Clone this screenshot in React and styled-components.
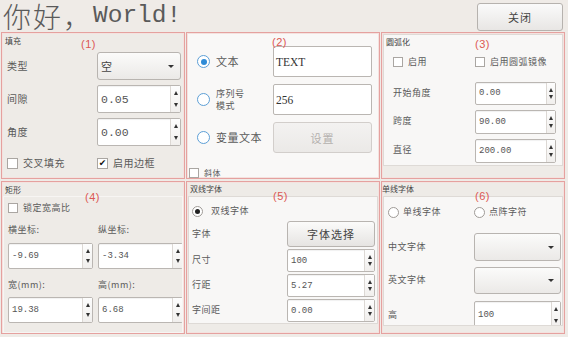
import React from "react";
import styled, { createGlobalStyle } from "styled-components";

const Global = createGlobalStyle`
  html, body { margin: 0; padding: 0; background: #efebe7; }
  body { font-family: "Noto Sans CJK SC", "Noto Sans", sans-serif; color: #555; }
  #root { width: 568px; height: 337px; }
`;

const Page = styled.div`
  width: 568px;
  height: 337px;
  overflow: hidden;
  box-sizing: border-box;
  padding-left: 1px;
  display: flex;
  flex-direction: column;
`;

const Header = styled.header`
  height: 32px;
  flex-shrink: 0;
  display: flex;
  align-items: flex-start;
  justify-content: space-between;
  padding-right: 5px;
`;

const Title = styled.h1`
  margin: 0;
  padding-left: 2px;
  height: 32px;
  display: flex;
  align-items: center;
  font-weight: 400;
  color: #5a5a5a;
  white-space: nowrap;
`;

const TitleCjk = styled.span`
  font-family: "Noto Sans CJK SC", sans-serif;
  font-size: 28px;
  line-height: 30px;
  font-weight: 300;
  letter-spacing: 2px;
`;

const TitleLatin = styled.span`
  font-family: "Liberation Mono", monospace;
  font-size: 24.5px;
  line-height: 30px;
`;

const CloseButton = styled.button`
  margin-top: 3px;
  width: 86px;
  height: 28px;
  box-sizing: border-box;
  border: 1px solid #b6b2ae;
  border-radius: 3px;
  background: linear-gradient(#fafafa, #e8e6e4);
  font-family: "Noto Sans CJK SC", sans-serif;
  font-size: 11px;
  color: #444;
  letter-spacing: 1px;
  padding: 0;
`;

const Board = styled.main`
  display: grid;
  grid-template-columns: 184px 194px 184px;
  grid-template-rows: 147px 153px;
  column-gap: 1px;
  row-gap: 2px;
`;

const Panel = styled.section`
  position: relative;
  box-sizing: border-box;
  border: 1px solid #e5a19f;
  box-shadow: inset 0 0 0 1px #f4e2df;
  background: ${(p) => p.$bg || "#eeebe7"};
  overflow: hidden;
  display: flex;
  flex-direction: column;
`;

const Tag = styled.span`
  position: absolute;
  top: ${(p) => p.$top}px;
  left: ${(p) => p.$left}px;
  font-family: "Liberation Sans", sans-serif;
  font-size: 11px;
  line-height: 1;
  color: #dc5753;
  letter-spacing: 0.5px;
`;

const PanelTitle = styled.div`
  font-size: 8px;
  line-height: 10px;
  color: #444;
  padding: ${(p) => p.$pad || "3px 0 0 3px"};
`;

const Group = styled.div`
  margin: ${(p) => p.$margin || "0 1px"};
  height: ${(p) => p.$h}px;
  box-sizing: border-box;
  border: 1px solid ${(p) => p.$line || "#dedad6"};
  background: ${(p) => p.$bg || "#f8f7f6"};
  overflow: hidden;
  padding: ${(p) => p.$pad || "0"};
`;

const FieldGrid = styled.div`
  display: grid;
  grid-template-columns: ${(p) => p.$cols};
  column-gap: ${(p) => p.$colGap || 0}px;
  row-gap: ${(p) => p.$gap || 0}px;
  align-items: center;
  padding-left: ${(p) => p.$left || 0}px;
  margin-top: ${(p) => p.$top || 0}px;
`;

const Label = styled.span`
  font-size: ${(p) => p.$size || 9}px;
  line-height: 1.2;
  color: #5a5a5a;
  letter-spacing: ${(p) => p.$ls || 0.5}px;
  white-space: nowrap;
`;

const SmallLabel = styled.span`
  font-size: 9px;
  line-height: 12px;
  color: #5a5a5a;
  letter-spacing: 0.5px;
`;

/* inputs */
const SpinBox = styled.div`
  display: flex;
  height: ${(p) => p.$h}px;
  box-sizing: border-box;
  border: 1px solid #bab6b2;
  border-radius: 2px;
  background: #fff;
  box-shadow: inset 0 1px 1px rgba(0, 0, 0, 0.06);
`;

const SpinValue = styled.span`
  flex: 1;
  display: flex;
  align-items: center;
  padding-left: ${(p) => p.$pad}px;
  font-family: "Liberation Mono", monospace;
  font-size: ${(p) => p.$size}px;
  color: #555;
`;

const Arrows = styled.div`
  width: ${(p) => p.$w}px;
  border-left: 1px solid #dcd8d4;
  display: flex;
  flex-direction: column;
  justify-content: space-between;
  align-items: center;
  padding: 5px 0;
  box-sizing: border-box;
  background: linear-gradient(#fdfdfd, #f1efed);
`;

const Tri = styled.span`
  width: 0;
  height: 0;
  border-left: 2.5px solid transparent;
  border-right: 2.5px solid transparent;
  ${(p) => (p.$up ? "border-bottom: 4px solid #333;" : "border-top: 4px solid #333;")}
`;

const TextField = styled.div`
  height: ${(p) => p.$h}px;
  box-sizing: border-box;
  border: 1px solid #bab6b2;
  border-radius: 2px;
  background: #fff;
  display: flex;
  align-items: center;
  padding-left: 2px;
  font-family: "Liberation Serif", serif;
  font-size: 11.5px;
  color: #333;
`;

const Combo = styled.div`
  height: ${(p) => p.$h}px;
  box-sizing: border-box;
  border: 1px solid #b8b4b0;
  border-radius: 3px;
  background: linear-gradient(#fbfbfa, #ebe9e7);
  display: flex;
  align-items: center;
  justify-content: space-between;
  padding: 0 6px 0 3px;
  font-size: 11px;
  color: #444;
`;

const ComboArrow = styled.span`
  width: 0;
  height: 0;
  border-left: 3px solid transparent;
  border-right: 3px solid transparent;
  border-top: 3px solid #333;
`;

const PushButton = styled.button`
  height: ${(p) => p.$h}px;
  box-sizing: border-box;
  border: 1px solid ${(p) => (p.disabled ? "#d2cecb" : "#b8b4b0")};
  border-radius: 3px;
  background: ${(p) =>
    p.disabled ? "linear-gradient(#f3f2f1, #ebe9e7)" : "linear-gradient(#fbfbfa, #e6e4e2)"};
  color: ${(p) => (p.disabled ? "#b4b0ad" : "#444")};
  font-family: "Noto Sans CJK SC", sans-serif;
  font-size: ${(p) => p.$size}px;
  letter-spacing: 1px;
  padding: 0;
`;

const CheckRow = styled.label`
  display: flex;
  align-items: center;
  gap: ${(p) => p.$gap || 5}px;
  margin-top: ${(p) => p.$top || 0}px;
  padding-left: ${(p) => p.$left || 0}px;
`;

const CheckBox = styled.span`
  width: ${(p) => p.$s}px;
  height: ${(p) => p.$s}px;
  box-sizing: border-box;
  border: 1px solid #aaa6a2;
  background: #fff;
  display: inline-flex;
  align-items: center;
  justify-content: center;
  font-family: "DejaVu Sans", sans-serif;
  font-size: 9px;
  line-height: 1;
  color: #111;
  flex-shrink: 0;
`;

const RadioCircle = styled.span`
  width: ${(p) => p.$s}px;
  height: ${(p) => p.$s}px;
  box-sizing: border-box;
  border-radius: 50%;
  border: 1px solid ${(p) => p.$ring};
  background: #fff;
  display: inline-flex;
  align-items: center;
  justify-content: center;
  flex-shrink: 0;
  &::after {
    content: "";
    width: ${(p) => (p.$dot ? p.$dotSize : 0)}px;
    height: ${(p) => (p.$dot ? p.$dotSize : 0)}px;
    border-radius: 50%;
    background: ${(p) => p.$dot || "transparent"};
  }
`;

const RadioRow = styled.div`
  display: flex;
  align-items: center;
  gap: ${(p) => p.$gap}px;
`;

const RadioPair = styled.div`
  display: grid;
  grid-template-columns: ${(p) => p.$cols};
  align-items: center;
  padding-top: ${(p) => p.$top}px;
`;

const LeftRow = styled.div`
  margin-top: ${(p) => p.$top || 0}px;
`;

function Spin({ value, h, size = 9, pad = 3, w = 10 }) {
  return (
    <SpinBox $h={h}>
      <SpinValue $size={size} $pad={pad}>{value}</SpinValue>
      <Arrows $w={w}>
        <Tri $up />
        <Tri />
      </Arrows>
    </SpinBox>
  );
}

function Check({ checked, s = 10, gap = 5, children, size = 9, top, left }) {
  return (
    <CheckRow $gap={gap} $top={top} $left={left}>
      <CheckBox $s={s}>{checked ? "✔" : ""}</CheckBox>
      <Label $size={size}>{children}</Label>
    </CheckRow>
  );
}

function Radio({ kind = "gray", checked, s = 11, gap = 5, children, size = 9 }) {
  const ring = kind === "blue" ? "#5d9fd6" : "#9f9b97";
  const dot = checked ? (kind === "blue" ? "#2f8bd6" : "#222") : null;
  return (
    <RadioRow $gap={gap}>
      <RadioCircle $s={s} $ring={ring} $dot={dot} $dotSize={kind === "blue" ? 6 : 5} />
      {typeof children === "string" ? <Label $size={size}>{children}</Label> : children}
    </RadioRow>
  );
}

export default function App() {
  return (
    <>
      <Global />
      <Page>
        <Header>
          <Title>
            <TitleCjk>你好，</TitleCjk>
            <TitleLatin>World!</TitleLatin>
          </Title>
          <CloseButton>关闭</CloseButton>
        </Header>

        <Board>
          {/* (1) 填充 */}
          <Panel>
            <Tag $left={79} $top={6}>(1)</Tag>
            <PanelTitle>填充</PanelTitle>
            <FieldGrid $cols="90px 84px" $gap={5} $left={5} $top={6}>
              <Label $size={10}>类型</Label>
              <Combo $h={28}>
                <span>空</span>
                <ComboArrow />
              </Combo>
              <Label $size={10}>间隙</Label>
              <Spin value="0.05" h={28} size={11.5} pad={3} />
              <Label $size={10}>角度</Label>
              <Spin value="0.00" h={28} size={11.5} pad={3} />
            </FieldGrid>
            <FieldGrid $cols="90px 84px" $left={5} $top={11}>
              <Check s={11} size={10}>交叉填充</Check>
              <Check s={11} size={10} checked>启用边框</Check>
            </FieldGrid>
          </Panel>

          {/* (2) 文本 */}
          <Panel $bg="#f9f8f7">
            <Tag $left={85} $top={4}>(2)</Tag>
            <FieldGrid $cols="76px 99px" $gap={7} $left={10} $top={13}>
              <Radio kind="blue" checked s={13} gap={6} size={11}>文本</Radio>
              <TextField $h={31}>TEXT</TextField>
              <Radio kind="blue" s={13} gap={6}>
                <SmallLabel>序列号<br />模式</SmallLabel>
              </Radio>
              <TextField $h={31}>256</TextField>
              <Radio kind="blue" s={13} gap={6} size={11}>变量文本</Radio>
              <PushButton $h={31} $size={11} disabled>设置</PushButton>
            </FieldGrid>
            <Check top={15} left={2} size={8} s={10}>斜体</Check>
          </Panel>

          {/* (3) 圆弧化 */}
          <Panel>
            <Tag $left={93} $top={6}>(3)</Tag>
            <Group $h={132} $margin="1px 1px 0 1px">
              <PanelTitle $pad="2px 0 0 2px">圆弧化</PanelTitle>
              <FieldGrid $cols="82px 81px" $left={9} $top={10}>
                <Check>启用</Check>
                <Check>启用圆弧镜像</Check>
              </FieldGrid>
              <FieldGrid $cols="82px 81px" $gap={5} $left={9} $top={14}>
                <Label>开始角度</Label>
                <Spin value="0.00" h={23} w={9} />
                <Label>跨度</Label>
                <Spin value="90.00" h={24} w={9} />
                <Label>直径</Label>
                <Spin value="200.00" h={24} w={9} />
              </FieldGrid>
            </Group>
          </Panel>

          {/* (4) 矩形 */}
          <Panel>
            <Tag $left={83} $top={10}>(4)</Tag>
            <PanelTitle $pad="3px 0 0 3px">矩形</PanelTitle>
            <Group $h={140} $bg="transparent" $line="#f7f5f3" $margin="1px 1px 0 1px">
              <Check top={6} left={4}>锁定宽高比</Check>
              <FieldGrid $cols="85px 85px" $colGap={5} $left={4} $top={11}>
                <Label>横坐标:</Label>
                <Label>纵坐标:</Label>
              </FieldGrid>
              <FieldGrid $cols="85px 85px" $colGap={5} $left={4} $top={7}>
                <Spin value="-9.69" h={26} />
                <Spin value="-3.34" h={26} />
              </FieldGrid>
              <FieldGrid $cols="85px 85px" $colGap={5} $left={4} $top={11}>
                <Label>宽(mm):</Label>
                <Label>高(mm):</Label>
              </FieldGrid>
              <FieldGrid $cols="85px 85px" $colGap={5} $left={4} $top={7}>
                <Spin value="19.38" h={26} />
                <Spin value="6.68" h={26} />
              </FieldGrid>
            </Group>
          </Panel>

          {/* (5) 双线字体 */}
          <Panel>
            <Tag $left={86} $top={9}>(5)</Tag>
            <PanelTitle $pad="2px 0 0 3px">双线字体</PanelTitle>
            <Group $h={128} $margin="2px 1px 0 1px" $pad="0 0 0 3px">
              <LeftRow $top={9}>
                <Radio checked s={11} gap={8}>双线字体</Radio>
              </LeftRow>
              <FieldGrid $cols="95px 88px" $gap={2} $top={4}>
                <Label>字体</Label>
                <PushButton $h={26} $size={11}>字体选择</PushButton>
                <Label>尺寸</Label>
                <Spin value="100" h={23} />
                <Label>行距</Label>
                <Spin value="5.27" h={23} />
                <Label>字间距</Label>
                <Spin value="0.00" h={23} />
              </FieldGrid>
            </Group>
          </Panel>

          {/* (6) 单线字体 */}
          <Panel>
            <Tag $left={93} $top={9}>(6)</Tag>
            <PanelTitle $pad="2px 0 0 0">单线字体</PanelTitle>
            <Group $h={130} $margin="2px 1px 0 1px" $pad="0 0 0 4px">
              <RadioPair $cols="86px 86px" $top={10}>
                <Radio s={11} gap={4}>单线字体</Radio>
                <Radio s={11} gap={4}>点阵字符</Radio>
              </RadioPair>
              <FieldGrid $cols="86px 87px" $gap={6} $top={15}>
                <Label>中文字体</Label>
                <Combo $h={28}>
                  <span />
                  <ComboArrow />
                </Combo>
                <Label>英文字体</Label>
                <Combo $h={27}>
                  <span />
                  <ComboArrow />
                </Combo>
              </FieldGrid>
              <FieldGrid $cols="86px 87px" $top={7}>
                <Label>高</Label>
                <Spin value="100" h={28} w={9} />
              </FieldGrid>
            </Group>
          </Panel>
        </Board>
      </Page>
    </>
  );
}
